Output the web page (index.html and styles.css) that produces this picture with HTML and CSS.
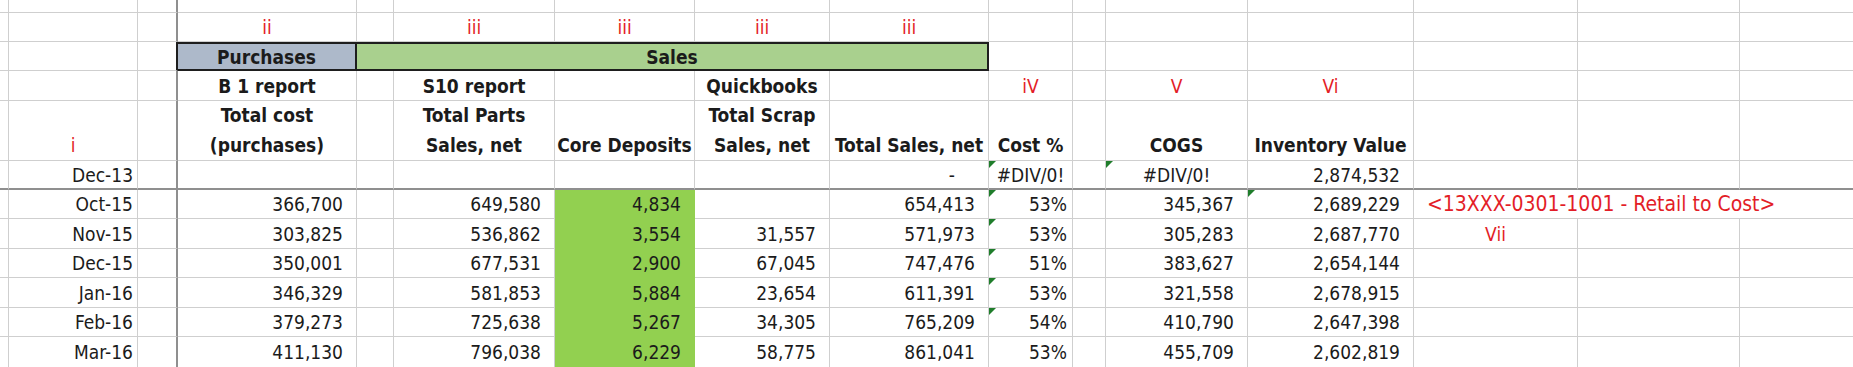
FILE: index.html
```html
<!DOCTYPE html>
<html>
<head>
<meta charset="utf-8">
<title>Inventory sheet</title>
<link rel="stylesheet" href="styles.css">
</head>
<body>
<div class="sheet">
  <!-- row 0 -->
  <div class="c"></div><div class="c"></div><div class="c sep"></div><div class="c"></div><div class="c"></div><div class="c"></div><div class="c"></div><div class="c"></div><div class="c"></div><div class="c"></div><div class="c"></div><div class="c"></div><div class="c"></div><div class="c"></div><div class="c"></div><div class="c end"></div>
  <!-- row 1 -->
  <div class="c"></div><div class="c"></div><div class="c sep"></div><div class="c ctr red">ii</div><div class="c"></div><div class="c ctr red">iii</div><div class="c ctr red">iii</div><div class="c ctr red">iii</div><div class="c ctr red">iii</div><div class="c"></div><div class="c"></div><div class="c"></div><div class="c"></div><div class="c"></div><div class="c"></div><div class="c end"></div>
  <!-- row 2 -->
  <div class="c"></div><div class="c"></div><div class="c sep boxedge"></div><div class="c ctr b box purch">Purchases</div><div class="c ctr b box sales">Sales</div><div class="c"></div><div class="c"></div><div class="c"></div><div class="c"></div><div class="c"></div><div class="c"></div><div class="c end"></div>
  <!-- row 3 -->
  <div class="c"></div><div class="c"></div><div class="c sep"></div><div class="c ctr b">B 1 report</div><div class="c"></div><div class="c ctr b">S10 report</div><div class="c"></div><div class="c ctr b">Quickbooks</div><div class="c"></div><div class="c ctr red">iV</div><div class="c"></div><div class="c ctr red">V</div><div class="c ctr red">Vi</div><div class="c"></div><div class="c"></div><div class="c end"></div>
  <!-- row 4 -->
  <div class="c tall"></div><div class="c tall ctr red">i</div><div class="c tall sep"></div><div class="c tall ctr b">Total cost<br>(purchases)</div><div class="c tall"></div><div class="c tall ctr b">Total Parts<br>Sales, net</div><div class="c tall ctr b">Core Deposits</div><div class="c tall ctr b">Total Scrap<br>Sales, net</div><div class="c tall ctr b">Total Sales, net</div><div class="c tall ctr b">Cost %</div><div class="c tall"></div><div class="c tall ctr b">COGS</div><div class="c tall ctr b">Inventory Value</div><div class="c tall"></div><div class="c tall"></div><div class="c tall end"></div>
  <!-- row 5 -->
  <div class="c rule"></div><div class="c rule date">Dec-13</div><div class="c rule sep"></div><div class="c rule"></div><div class="c rule"></div><div class="c rule"></div><div class="c rule"></div><div class="c rule"></div><div class="c rule num dash">-</div><div class="c rule ctr mark">#DIV/0!</div><div class="c rule"></div><div class="c rule ctr mark">#DIV/0!</div><div class="c rule num">2,874,532</div><div class="c rule"></div><div class="c rule"></div><div class="c rule end"></div>
  <!-- Oct-15 -->
  <div class="c"></div><div class="c date">Oct-15</div><div class="c sep"></div><div class="c num">366,700</div><div class="c"></div><div class="c num">649,580</div><div class="c num green">4,834</div><div class="c"></div><div class="c num">654,413</div><div class="c pct mark">53%</div><div class="c"></div><div class="c num">345,367</div><div class="c num mark">2,689,229</div><div class="c red note">&lt;13XXX-0301-1001 - Retail to Cost&gt;</div>
  <!-- Nov-15 -->
  <div class="c"></div><div class="c date">Nov-15</div><div class="c sep"></div><div class="c num">303,825</div><div class="c"></div><div class="c num">536,862</div><div class="c num green">3,554</div><div class="c num">31,557</div><div class="c num">571,973</div><div class="c pct mark">53%</div><div class="c"></div><div class="c num">305,283</div><div class="c num">2,687,770</div><div class="c ctr red">Vii</div><div class="c"></div><div class="c end"></div>
  <!-- Dec-15 -->
  <div class="c"></div><div class="c date">Dec-15</div><div class="c sep"></div><div class="c num">350,001</div><div class="c"></div><div class="c num">677,531</div><div class="c num green">2,900</div><div class="c num">67,045</div><div class="c num">747,476</div><div class="c pct mark">51%</div><div class="c"></div><div class="c num">383,627</div><div class="c num">2,654,144</div><div class="c"></div><div class="c"></div><div class="c end"></div>
  <!-- Jan-16 -->
  <div class="c"></div><div class="c date">Jan-16</div><div class="c sep"></div><div class="c num">346,329</div><div class="c"></div><div class="c num">581,853</div><div class="c num green">5,884</div><div class="c num">23,654</div><div class="c num">611,391</div><div class="c pct mark">53%</div><div class="c"></div><div class="c num">321,558</div><div class="c num">2,678,915</div><div class="c"></div><div class="c"></div><div class="c end"></div>
  <!-- Feb-16 -->
  <div class="c"></div><div class="c date">Feb-16</div><div class="c sep"></div><div class="c num">379,273</div><div class="c"></div><div class="c num">725,638</div><div class="c num green">5,267</div><div class="c num">34,305</div><div class="c num">765,209</div><div class="c pct mark">54%</div><div class="c"></div><div class="c num">410,790</div><div class="c num">2,647,398</div><div class="c"></div><div class="c"></div><div class="c end"></div>
  <!-- Mar-16 -->
  <div class="c"></div><div class="c date">Mar-16</div><div class="c sep"></div><div class="c num">411,130</div><div class="c"></div><div class="c num">796,038</div><div class="c num green">6,229</div><div class="c num">58,775</div><div class="c num">861,041</div><div class="c pct">53%</div><div class="c"></div><div class="c num">455,709</div><div class="c num">2,602,819</div><div class="c"></div><div class="c"></div><div class="c end"></div>
</div>
</body>
</html>
```

FILE: styles.css
```css
html, body {
  margin: 0;
  padding: 0;
  background: #ffffff;
  overflow: hidden;
}

.sheet {
  display: grid;
  grid-template-columns: 9px 129px 40px 179px 37px 161px 140px 135px 159px 84px 33px 142px 166px 164px 162px 113px;
  grid-template-rows: 13px 29px 29px 30px 60px 29px 29px 30px 29px 30px 29px 31px;
  width: 1853px;
  font-family: "DejaVu Sans Condensed", "DejaVu Sans", sans-serif;
  font-size: 19px;
  color: #1b1b1b;
}

.c {
  box-sizing: border-box;
  border-right: 1px solid #cfcfcf;
  border-bottom: 1px solid #cfcfcf;
  display: flex;
  align-items: center;
  white-space: nowrap;
  line-height: 30px;
  min-width: 0;
}

.end { border-right: none; }

.sep { border-right: 2px solid #8f8f8f; }

.rule { border-bottom: 2px solid #8f8f8f; }

.tall { align-items: flex-end; }

.ctr {
  justify-content: center;
  text-align: center;
}

.b { font-weight: 700; }

.red { color: #e31d27; }

.num {
  justify-content: flex-end;
  padding-right: 13px;
}

.date {
  justify-content: flex-end;
  padding-right: 4px;
}

.pct {
  justify-content: flex-end;
  padding-right: 5px;
}

.dash { padding-right: 33px; }

.mark { position: relative; }

.mark::before {
  content: "";
  position: absolute;
  left: 0;
  top: 0;
  border-top: 7px solid #1f7d2b;
  border-right: 7px solid transparent;
}

.green {
  background: #92d050;
  border-right-color: #92d050;
  border-bottom-color: #92d050;
}

.box {
  border-top: 2px solid #1e1e1e;
  border-bottom: 2px solid #1e1e1e;
  border-right: 2px solid #1e1e1e;
}

.boxedge { border-right-color: #1e1e1e; }

.purch { background: #adb9ca; }

.sales {
  grid-column: span 5;
  background: #a9d08e;
}

.note {
  grid-column: span 3;
  border-right: none;
  padding-left: 13px;
  font-size: 21px;
}
```
